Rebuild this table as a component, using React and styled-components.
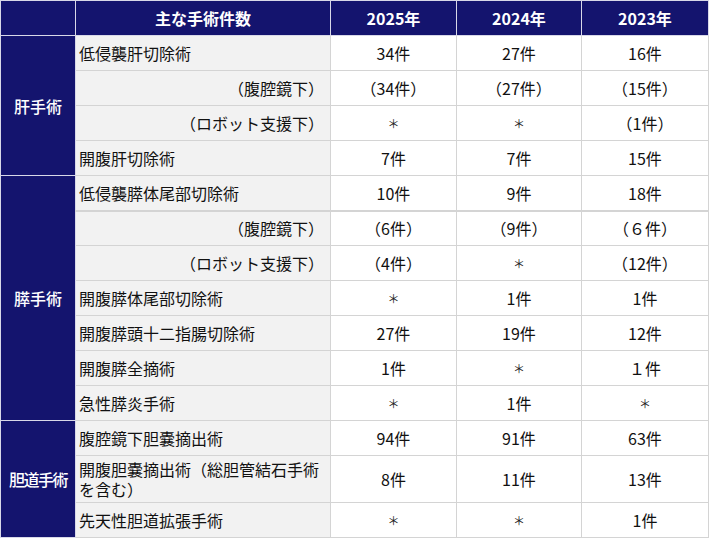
import React from "react";
import styled, { createGlobalStyle } from "styled-components";

const Global = createGlobalStyle`
  html, body { margin: 0; padding: 0; background: #ffffff; }
  body { font-family: "Noto Sans CJK JP", "Noto Sans", sans-serif; color: #111111; }
`;

const Table = styled.table`
  width: 708px;
  table-layout: fixed;
  border-collapse: collapse;
  font-size: 16px;
  line-height: 20px;
`;

const HeadCell = styled.th`
  height: 34px;
  padding: 0 3px;
  background: #14146e;
  color: #ffffff;
  font-weight: 700;
  text-align: center;
  vertical-align: middle;
  border: 1px solid #d8d8e8;
`;

const GroupCell = styled.th`
  background: #14146e;
  color: #ffffff;
  font-weight: 500;
  text-align: center;
  vertical-align: middle;
  padding: 0 2px;
  border: 1px solid #d8d8e8;
  white-space: nowrap;
  letter-spacing: ${(p) => (p.$tight ? "-1.5px" : "0")};
`;

const Row = styled.tr`
  height: 35px;
  border-bottom: ${(p) => (p.$thick ? "2px solid #d4d4d4" : "1px solid #d4d4d4")};
`;

const NameCell = styled.td`
  background: #f2f2f2;
  padding: 3px ${(p) => (p.$sub ? "6px" : "3px")} 3px 3px;
  text-align: ${(p) => (p.$sub ? "right" : "left")};
  vertical-align: middle;
  border: 1px solid #d4d4d4;
  border-bottom: inherit;
`;

const ValueCell = styled.td`
  background: #ffffff;
  padding: 3px;
  text-align: center;
  vertical-align: middle;
  border: 1px solid #d4d4d4;
  border-bottom: inherit;
`;

const Mark = styled.span`
  font-size: 12px;
  color: #222222;
`;

const groups = [
  {
    name: "肝手術",
    rows: [
      { label: "低侵襲肝切除術", v: ["34件", "27件", "16件"] },
      { label: "（腹腔鏡下）", sub: true, v: ["（34件）", "（27件）", "（15件）"] },
      { label: "（ロボット支援下）", sub: true, v: ["＊", "＊", "（1件）"] },
      { label: "開腹肝切除術", v: ["7件", "7件", "15件"] },
    ],
  },
  {
    name: "膵手術",
    rows: [
      { label: "低侵襲膵体尾部切除術", thick: true, v: ["10件", "9件", "18件"] },
      { label: "（腹腔鏡下）", sub: true, v: ["（6件）", "（9件）", "（６件）"] },
      { label: "（ロボット支援下）", sub: true, v: ["（4件）", "＊", "（12件）"] },
      { label: "開腹膵体尾部切除術", v: ["＊", "1件", "1件"] },
      { label: "開腹膵頭十二指腸切除術", v: ["27件", "19件", "12件"] },
      { label: "開腹膵全摘術", v: ["1件", "＊", "１件"] },
      { label: "急性膵炎手術", v: ["＊", "1件", "＊"] },
    ],
  },
  {
    name: "胆道手術",
    tight: true,
    rows: [
      { label: "腹腔鏡下胆嚢摘出術", v: ["94件", "91件", "63件"] },
      { label: "開腹胆嚢摘出術（総胆管結石手術を含む）", v: ["8件", "11件", "13件"] },
      { label: "先天性胆道拡張手術", v: ["＊", "＊", "1件"] },
    ],
  },
];

export default function App() {
  return (
    <>
      <Global />
      <Table>
        <colgroup>
          <col style={{ width: 75 }} />
          <col style={{ width: 255 }} />
          <col style={{ width: 126 }} />
          <col style={{ width: 125 }} />
          <col style={{ width: 127 }} />
        </colgroup>
        <thead>
          <tr>
            <HeadCell />
            <HeadCell>主な手術件数</HeadCell>
            <HeadCell>2025年</HeadCell>
            <HeadCell>2024年</HeadCell>
            <HeadCell>2023年</HeadCell>
          </tr>
        </thead>
        <tbody>
          {groups.map((g) =>
            g.rows.map((r, i) => (
              <Row key={g.name + i} $thick={r.thick}>
                {i === 0 && (
                  <GroupCell rowSpan={g.rows.length} $tight={g.tight}>
                    {g.name}
                  </GroupCell>
                )}
                <NameCell $sub={r.sub}>{r.label}</NameCell>
                {r.v.map((val, j) => (
                  <ValueCell key={j}>
                    {val === "＊" ? <Mark>{val}</Mark> : val}
                  </ValueCell>
                ))}
              </Row>
            ))
          )}
        </tbody>
      </Table>
    </>
  );
}
